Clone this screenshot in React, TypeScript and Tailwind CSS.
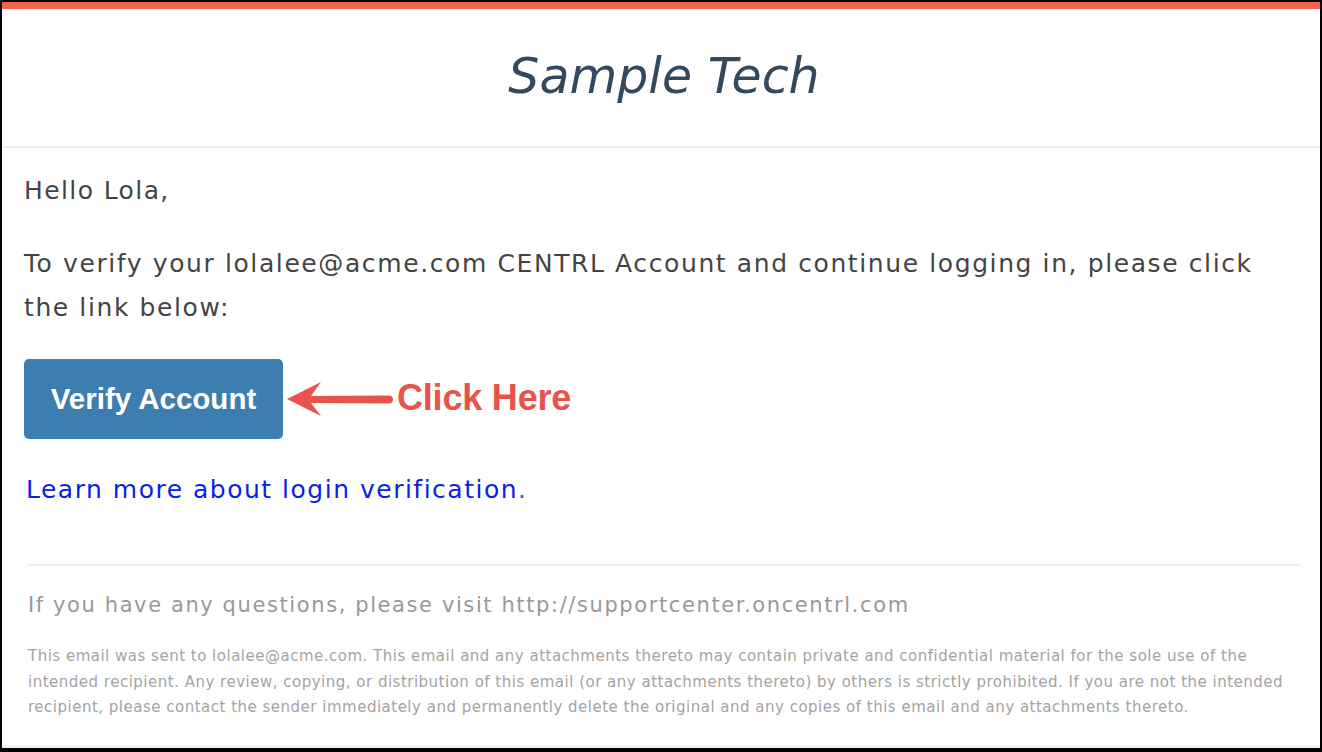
export default function App() {
    return (
        <div className="w-[1322px] h-[752px] overflow-hidden border-x-2 border-t-2 border-b-4 border-black flex flex-col bg-white" style={{ fontFamily: '"DejaVu Sans", Verdana, sans-serif' }}>
            <div className="h-[7px] bg-[#f1654c] shrink-0"></div>
            <div className="h-[137px] flex items-center justify-center pl-[6px] shrink-0">
                <h1 className="italic text-[49px] leading-none text-[#34495e] -mt-[2px]">Sample Tech</h1>
            </div>
            <div className="h-[2px] bg-[#f0f0f0] shrink-0"></div>

            <div className="flex-1 flex flex-col pl-[22px] pr-[20px]">
                <p className="mt-[21px] text-[25px] tracking-[1.4px] leading-[44px] text-[#444]">Hello Lola,</p>
                <p className="mt-[29px] max-w-[1245px] text-[25px] tracking-[1.6px] leading-[44px] text-[#444]">
                    To verify your lolalee@acme.com CENTRL Account and continue logging in, please click the link below:
                </p>

                <div className="mt-[29px] flex items-center">
                    <button className="w-[259px] h-[80px] rounded-[5px] bg-[#3d7daf] text-white text-[29.5px] font-bold" style={{ fontFamily: '"Liberation Sans", Arial, sans-serif' }}>
                        Verify Account
                    </button>
                    <svg width="112" height="40" viewBox="0 0 112 40" className="ml-[2px] -mt-[2px]">
                        <path d="M2 21 L36 4 L26 18 L104 17.5 A4 4 0 0 1 104 25.5 L26 25 L36 38 Z" fill="#e8534a" />
                    </svg>
                    <span className="text-[36px] font-bold text-[#e8534a] tracking-[-0.2px] -mt-[2px]" style={{ fontFamily: '"Liberation Sans", Arial, sans-serif' }}>
                        Click Here
                    </span>
                </div>

                <p className="mt-[29px] text-[25px] tracking-[1.5px] leading-[44px] pl-[2px]">
                    <a href="#" className="text-[#0a22e6]">Learn more about login verification</a>
                    <span className="text-[#3b5ccc]">.</span>
                </p>

                <div className="ml-[4px] mt-[52px] h-[2px] bg-[#f0f0f0]"></div>

                <p className="ml-[4px] mt-[24px] text-[21px] tracking-[1.6px] leading-[30px] text-[#999]">
                    If you have any questions, please visit http://supportcenter.oncentrl.com
                </p>
                <p className="ml-[4px] mt-[24px] text-[15px] tracking-[0.5px] leading-[25.5px] text-[#a3a3a3]">
                    This email was sent to lolalee@acme.com. This email and any attachments thereto may contain private and confidential material for the sole use of the intended recipient. Any review, copying, or distribution of this email (or any attachments thereto) by others is strictly prohibited. If you are not the intended recipient, please contact the sender immediately and permanently delete the original and any copies of this email and any attachments thereto.
                </p>
            </div>
            <div className="h-[3px] bg-[#f2f2f2] shrink-0"></div>
        </div>
    )
}
